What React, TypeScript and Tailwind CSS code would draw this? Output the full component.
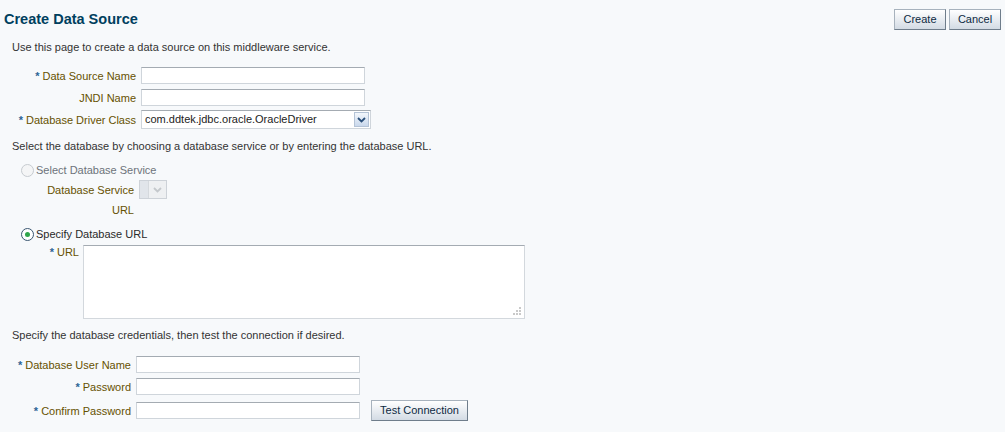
import type { FC, ReactNode } from 'react'

// Oracle ADF-like "Create Data Source" form

const Req: FC = () => <span className="mr-[3px] text-[#2d6596] font-bold">*</span>

const Label: FC<{ children: ReactNode; req?: boolean }> = ({ children, req }) => (
  <div className="text-right text-[#665100] whitespace-nowrap leading-[14px]">
    {req && <Req />}
    {children}
  </div>
)

const TextInput: FC<{ w: number }> = ({ w }) => (
  <input
    type="text"
    style={{ width: w }}
    className="h-[17px] bg-white border border-[#cfd5db] border-t-[#a4abb2] outline-none"
  />
)

const Chevron: FC<{ color: string }> = ({ color }) => (
  <svg width="9" height="6" viewBox="0 0 9 6">
    <path d="M1 1 L4.5 4.5 L8 1" fill="none" stroke={color} strokeWidth="1.8" />
  </svg>
)

const Btn: FC<{ children: ReactNode; w: number }> = ({ children, w }) => (
  <button
    type="button"
    style={{ width: w }}
    className="h-[21px] text-[11px] text-[#0d2a42] border border-[#a7b2bd] border-r-[#6f7d8b] border-b-[#6f7d8b] bg-gradient-to-b from-[#ffffff] to-[#d3dbe4]"
  >
    {children}
  </button>
)

const Radio: FC<{ checked?: boolean; disabled?: boolean; children: ReactNode }> = ({ checked, disabled, children }) => (
  <div className="flex items-center pl-[21px] h-[14px]">
    <span
      className={
        checked
          ? 'w-[13px] h-[13px] rounded-full border border-[#3a5670] bg-white flex items-center justify-center'
          : 'w-[13px] h-[13px] rounded-full border border-[#c6cbd0] bg-[#f4f5f6]'
      }
    >
      {checked && <span className="w-[5px] h-[5px] rounded-full bg-[#2fa54a]" />}
    </span>
    <span className={disabled ? 'ml-[2px] text-[#6d737a]' : 'ml-[2px] text-[#2a2a2a]'}>{children}</span>
  </div>
)

export default function App() {
  return (
    <div
      className="w-[1005px] h-[432px] bg-[#f7f9fb] text-[11px] text-[#333333] overflow-hidden"
      style={{ fontFamily: '"Liberation Sans", Arial, sans-serif' }}
    >
      {/* header */}
      <div className="flex items-center justify-between pt-[9px] pl-[4px] pr-[4px]">
        <h1 className="text-[14.5px] font-bold text-[#003f5e] leading-[21px]">Create Data Source</h1>
        <div className="flex gap-[3px]">
          <Btn w={52}>Create</Btn>
          <Btn w={52}>Cancel</Btn>
        </div>
      </div>

      <p className="mt-[10px] pl-[12px] leading-[14px]">Use this page to create a data source on this middleware service.</p>

      {/* name / jndi / driver */}
      <div className="mt-[13px] grid grid-cols-[136px_auto] gap-x-[5px] items-center justify-start">
        <Label req>Data Source Name</Label>
        <TextInput w={224} />
        <div className="h-[5px] col-span-2" />
        <Label>JNDI Name</Label>
        <TextInput w={224} />
        <div className="h-[4px] col-span-2" />
        <Label req>Database Driver Class</Label>
        <div className="w-[230px] h-[19px] flex items-center justify-between bg-white border border-[#cfd5db] border-t-[#a4abb2]">
          <span className="pl-[3px] text-[#222]">com.ddtek.jdbc.oracle.OracleDriver</span>
          <span className="w-[15px] h-[15px] mr-[1px] flex items-center justify-center border border-[#b4c3d6] bg-gradient-to-b from-[#f3f7fc] to-[#c9d8ec]">
            <Chevron color="#2a4f7a" />
          </span>
        </div>
      </div>

      <p className="mt-[10px] pl-[12px] leading-[14px]">
        Select the database by choosing a database service or by entering the database URL.
      </p>

      <div className="mt-[10px]">
        <Radio disabled>Select Database Service</Radio>
      </div>

      <div className="mt-[3px] grid grid-cols-[134px_auto] gap-x-[5px] items-center justify-start">
        <Label>Database Service</Label>
        <div className="w-[28px] h-[19px] flex items-stretch border border-[#cdd2d8]">
          <span className="w-[8px] bg-[#e1e5ea]" />
          <span className="flex-1 flex items-center justify-center bg-[#eef0f2] border-l border-[#d5d9dd]">
            <Chevron color="#c4c8cc" />
          </span>
        </div>
        <div className="mt-[4px] text-right text-[#665100] leading-[14px]">URL</div>
        <div />
      </div>

      <div className="mt-[10px]">
        <Radio checked>Specify Database URL</Radio>
      </div>

      <div className="mt-[4px] grid grid-cols-[79px_auto] gap-x-[4px] items-start justify-start">
        <div>
          <Label req>URL</Label>
        </div>
        <div className="w-[442px] h-[74px] bg-white border border-[#d3d8dd] border-t-[#a4abb2] flex items-end justify-end p-[2px]">
          <svg width="9" height="9" viewBox="0 0 9 9">
            <rect x="6" y="0" width="2" height="2" fill="#c9c9c9" />
            <rect x="3" y="3" width="2" height="2" fill="#c9c9c9" />
            <rect x="6" y="3" width="2" height="2" fill="#c9c9c9" />
            <rect x="0" y="6" width="2" height="2" fill="#c9c9c9" />
            <rect x="3" y="6" width="2" height="2" fill="#c9c9c9" />
            <rect x="6" y="6" width="2" height="2" fill="#c9c9c9" />
          </svg>
        </div>
      </div>

      <p className="mt-[9px] pl-[12px] leading-[14px]">Specify the database credentials, then test the connection if desired.</p>

      {/* credentials */}
      <div className="mt-[14px] grid grid-cols-[131px_auto_auto] gap-x-[5px] items-center justify-start">
        <Label req>Database User Name</Label>
        <TextInput w={224} />
        <div />
        <div className="h-[5px] col-span-3" />
        <Label req>Password</Label>
        <TextInput w={224} />
        <div />
        <div className="h-[5px] col-span-3" />
        <Label req>Confirm Password</Label>
        <TextInput w={224} />
        <div className="ml-[6px]">
          <Btn w={97}>Test Connection</Btn>
        </div>
      </div>
    </div>
  )
}
